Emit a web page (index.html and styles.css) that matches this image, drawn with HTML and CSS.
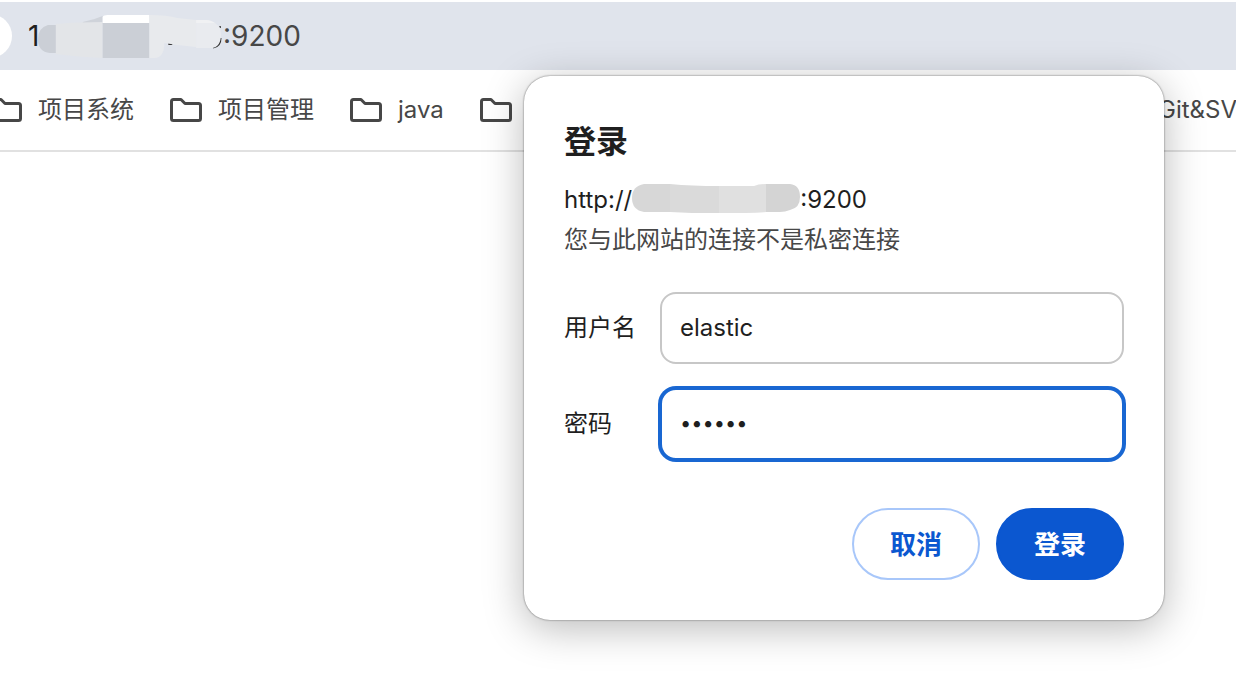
FILE: index.html
```html
<!DOCTYPE html>
<html lang="zh-CN">
<head>
<meta charset="utf-8">
<title>登录</title>
<link rel="stylesheet" href="styles.css">
</head>
<body>
<svg class="defs" aria-hidden="true">
  <symbol id="folder" viewBox="0 0 32 24">
    <path d="M3.500 1.500H11L15 5.500H28.500Q30.500 5.500 30.500 7.500V20.500Q30.500 22.500 28.500 22.500H3.500Q1.500 22.500 1.500 20.500V3.500Q1.500 1.500 3.500 1.500Z" fill="none" stroke="#474747" stroke-width="3" stroke-linejoin="round"/>
  </symbol>
</svg>
<header class="toolbar">
  <span class="site-chip"></span>
  <div class="address">
    <span class="address-start">1</span>
    <svg class="address-mask" viewBox="0 0 186 44" aria-hidden="true">
      <rect x="131" y="28" width="4" height="3" fill="#333"/>
      <path d="M183 24Q183 32 176 33" fill="none" stroke="#333" stroke-width="3"/>
      <path d="M182 12H184V14H183Z" fill="#555"/>
      <path d="M18 11H10Q0 14 0 25Q0 38 12 39H18Z" fill="#cbcfd6"/>
      <path d="M45 8Q56 6 65 2V10H45Z" fill="#cfd3da"/>
      <path d="M18 10Q44 8 65 8V44Q40 43 18 40Z" fill="#e3e5e8"/>
      <path d="M65 3Q66 1 70 1H112V9H65Z" fill="#fff"/>
      <path d="M65 9H112V44H65Z" fill="#cbcfd6"/>
      <path d="M112 1Q130 1 140 4L159 6V33Q143 32 127 29Q127 44 117 44H112Z" fill="#e8eaed"/>
      <path d="M159 6H172Q184 10 184 20Q184 33 175 34H159Z" fill="#e9ebef"/>
      <path d="M159 6H170Q175 7 178 9H159Z" fill="#f0f1f3"/>
    </svg>
    <span>:9200</span>
  </div>
</header>
<nav class="bookmarks" aria-label="书签">
  <a class="bookmark" href="#"><svg class="folder"><use href="#folder"/></svg>项目系统</a>
  <a class="bookmark" href="#"><svg class="folder"><use href="#folder"/></svg>项目管理</a>
  <a class="bookmark" href="#"><svg class="folder"><use href="#folder"/></svg>java</a>
  <a class="bookmark" href="#" aria-label="文件夹"><svg class="folder"><use href="#folder"/></svg></a>
  <a class="bookmark bookmark-last" href="#">Git&amp;SV</a>
</nav>
<form class="dialog" role="dialog" aria-labelledby="title">
  <h1 class="title" id="title">登录</h1>
  <p class="origin">http://<svg class="origin-mask" viewBox="0 0 168 32" aria-hidden="true">
      <path d="M38 0H12Q0 2 0 14Q0 26 12 28H38Z" fill="#d7d7d7"/>
      <path d="M38 0Q60 2 87 2V29H60L38 28Z" fill="#dadada"/>
      <path d="M87 2H122Q127 0 134 0V28Q120 29 87 29Z" fill="#e0e0e0"/>
      <path d="M134 0H158Q168 1 168 13Q168 24 158 26Q153 28 148 28H134Z" fill="#d4d4d4"/>
    </svg>:9200</p>
  <p class="warning">您与此网站的连接不是私密连接</p>
  <div class="fields">
    <label for="user">用户名</label>
    <input class="field" id="user" type="text" value="elastic">
    <label for="pass">密码</label>
    <input class="field field-active" id="pass" type="password" value="secret">
  </div>
  <div class="actions">
    <button class="button" type="button">取消</button>
    <button class="button button-primary" type="submit">登录</button>
  </div>
</form>
</body>
</html>
```
FILE: styles.css
```css
* { box-sizing: border-box; }
body {
  margin: 0;
  min-height: 100vh;
  background: #fff;
  color: #1f1f1f;
  font: 24px/32px Inter, "Noto Sans CJK SC", sans-serif;
  overflow: hidden;
}
.defs { position: absolute; width: 0; height: 0; }
.toolbar {
  display: flex;
  align-items: center;
  gap: 16px;
  height: 70px;
  border-top: 2px solid #fff;
  background: #e0e4ec;
}
.site-chip {
  width: 44px;
  height: 44px;
  margin-left: -32px;
  border-radius: 50%;
  background: #fff;
}
.address {
  display: flex;
  align-items: center;
  color: #474747;
  font-size: 28px;
}
.address-start { width: 10px; color: #1f1f1f; }
.address-mask { position: relative; width: 185px; height: 44px; }
.bookmarks {
  display: flex;
  align-items: center;
  gap: 36px;
  height: 82px;
  padding-left: 170px;
  margin-left: -180px;
  border-bottom: 2px solid #e1e1e1;
}
.bookmark {
  display: flex;
  flex: none;
  align-items: center;
  gap: 16px;
  color: #474747;
  text-decoration: none;
}
.bookmark-last { width: 78px; margin-left: auto; }
.folder { width: 32px; height: 24px; }
.dialog {
  position: absolute;
  top: 76px;
  right: 72px;
  width: 640px;
  padding: 40px;
  border-radius: 26px;
  background: #fff;
  box-shadow: 0 0 2px rgba(0, 0, 0, .6), 0 8px 40px rgba(0, 0, 0, .28);
}
.title { margin: 0; font-size: 32px; line-height: 52px; font-weight: 700; }
.origin { display: flex; align-items: center; height: 40px; margin: 12px 0 0; }
.origin-mask { width: 168px; height: 32px; }
.warning { margin: 0; line-height: 40px; color: #474747; }
.fields {
  display: grid;
  grid-template-columns: 72px 1fr;
  gap: 24px;
  align-items: center;
  margin-top: 32px;
}
.field {
  width: 100%;
  height: 72px;
  padding: 0 18px 2px;
  border: 2px solid #c7c7c7;
  border-radius: 16px;
  outline: none;
  background: #fff;
  color: #1f1f1f;
  font: inherit;
}
.field-active { border-color: #1967d2; box-shadow: 0 0 0 2px #1967d2; font-size: 20px; }
.actions { display: flex; justify-content: flex-end; gap: 16px; margin-top: 48px; }
.button {
  width: 128px;
  height: 72px;
  padding: 2px 0 0;
  border: 2px solid #a8c7fa;
  border-radius: 36px;
  background: #fff;
  color: #0b57d0;
  font: 700 26px/32px Inter, "Noto Sans CJK SC", sans-serif;
}
.button-primary { border-color: #0b57d0; background: #0b57d0; color: #fff; }
```
